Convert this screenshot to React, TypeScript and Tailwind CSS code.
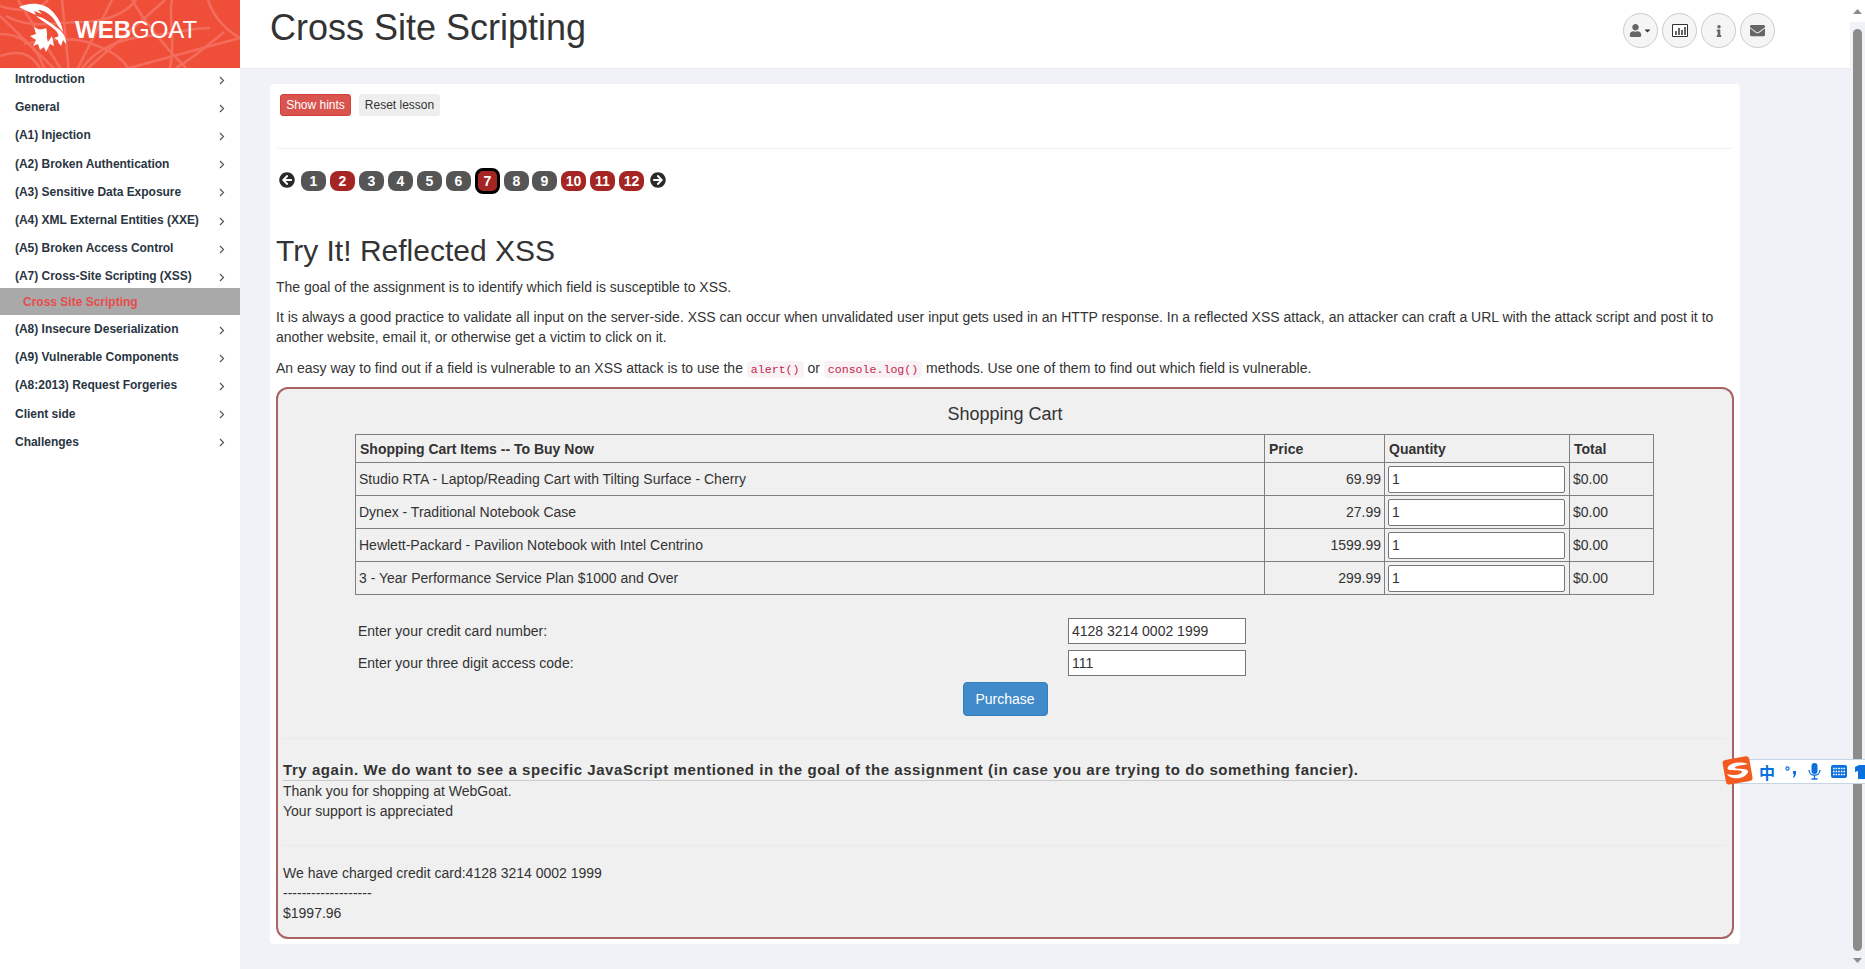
import { FaArrowCircleLeft, FaArrowCircleRight, FaUser, FaCaretDown, FaInfo, FaEnvelope } from "react-icons/fa";

const nav = [
  "Introduction",
  "General",
  "(A1) Injection",
  "(A2) Broken Authentication",
  "(A3) Sensitive Data Exposure",
  "(A4) XML External Entities (XXE)",
  "(A5) Broken Access Control",
  "(A7) Cross-Site Scripting (XSS)",
];
const nav2 = ["(A8) Insecure Deserialization", "(A9) Vulnerable Components", "(A8:2013) Request Forgeries", "Client side", "Challenges"];
const cart = [
  ["Studio RTA - Laptop/Reading Cart with Tilting Surface - Cherry", "69.99"],
  ["Dynex - Traditional Notebook Case", "27.99"],
  ["Hewlett-Packard - Pavilion Notebook with Intel Centrino", "1599.99"],
  ["3 - Year Performance Service Plan $1000 and Over", "299.99"],
];
const pages = [1, 2, 3, 4, 5, 6, 7, 8, 9, 10, 11, 12];
const red = [2, 10, 11, 12];

function NavRow({ label }: { label: string }) {
  return (
    <div className="flex h-[28.2px] items-center justify-between pl-[15px] pr-[15px] text-[12px] font-bold text-[#2a3542]">
      <span className="tracking-[-0.02px]">{label}</span>
      <svg width="6" height="9" viewBox="0 0 6 9" className="mt-[2px]">
        <path d="M1 1l3.5 3.5L1 8" fill="none" stroke="#555" strokeWidth="1.2" />
      </svg>
    </div>
  );
}

function Logo() {
  return (
    <div className="relative flex h-[68px] w-[240px] shrink-0 items-center overflow-hidden bg-[#ef4f39]">
      <svg width="240" height="68" viewBox="0 0 240 68" className="absolute left-0 top-0">
        <g fill="none" stroke="#f36c5c" strokeWidth="2.6">
          <path d="M70 84L0 16M70 84L18 0M70 84L62 0M70 84L112 0M70 84L165 0M70 84L240 38" />
          <path d="M208 0C214 18 226 30 240 38M224 32C205 48 190 60 176 68M132 0C146 24 168 50 186 68M172 0C168 16 176 40 170 68" />
          <path d="M0 56C18 50 30 52 40 68M0 34C16 34 34 40 44 68M0 6C24 14 42 8 48 0M24 44C44 40 76 36 92 44C110 50 122 58 128 68M6 16C30 30 60 22 82 22C104 22 126 14 136 0M82 68C96 50 118 38 150 36C170 34 190 28 210 28" />
        </g>
      </svg>
      <svg width="50" height="52" viewBox="0 0 50 52" className="relative ml-[18px] mt-[-12px] shrink-0">
        <g fill="#fff">
          <path d="M1 5C10 0 26 0 34 9C40 15 44 22 45 30L40 24C36 15 28 8 20 8L24 12L16 9L18 13L9 9Z" />
          <path d="M18 14C26 15 34 22 42 28C46 32 48 36 48 42L45 38L43 44L40 40C42 35 40 30 36 27C30 22 24 19 18 14Z" />
          <path d="M16 25C20 28 24 28 28 26C30 32 28 36 30 40L34 34L36 44L32 42L28 50L26 45L22 48L20 42L15 44L18 38L12 34L18 32Z" />
          <path d="M36 36L44 33L41 39Z" />
        </g>
      </svg>
      <div className="relative ml-[7px] mt-[-9px] text-[24px] leading-none text-white">
        <span className="font-bold">WEB</span>
        <span>GOAT</span>
      </div>
    </div>
  );
}

function RoundBtn({ children }: { children: React.ReactNode }) {
  return (
    <div className="flex h-[35px] w-[35px] items-center justify-center rounded-full border border-[#ccc] bg-[#f5f5f5] text-[#666]">
      {children}
    </div>
  );
}

function Sogou() {
  return (
    <div className="absolute left-[1721px] top-[755px] h-[31px] w-[144px]">
      <div className="absolute left-[14px] top-[4px] flex h-[25px] w-[130px] items-center overflow-hidden border-y border-[#c5d6e6] bg-white pl-[24px] text-[#0b6fdc]">
        <span className="w-[16px] shrink-0 font-['Noto_Sans_CJK_SC',sans-serif] text-[16px] font-bold leading-none">中</span>
        <svg width="12" height="14" viewBox="0 0 12 14" className="ml-[10px] shrink-0"><circle cx="2.5" cy="3.5" r="1.6" fill="none" stroke="#0b6fdc" strokeWidth="1.2" /><path d="M8 6h3v2c0 2.5-1 4-3 5l1-4H8z" fill="#0b6fdc" /></svg>
        <svg width="13" height="17" viewBox="0 0 13 17" className="ml-[11px] shrink-0"><rect x="3.5" y="0" width="6" height="11" rx="3" fill="#0b6fdc" /><path d="M1 7c0 7 11 7 11 0M6.500 12v4M3.500 16h6" stroke="#0b6fdc" strokeWidth="1.3" fill="none" /></svg>
        <svg width="16" height="13" viewBox="0 0 16 13" className="ml-[10px] shrink-0"><rect width="16" height="13" rx="2" fill="#0b6fdc" /><path d="M2 3.500h12M2 6.500h12M2 9.500h12" stroke="#fff" strokeWidth="1.4" strokeDasharray="1.6 1" /></svg>
        <svg width="14" height="14" viewBox="0 0 14 14" className="ml-[8px] shrink-0"><path d="M0 2L4 0h6l4 2v5l-2-1v8H3V6L0 7z" fill="#0b6fdc" /></svg>
      </div>
      <svg width="33" height="31" viewBox="0 0 33 31" className="absolute left-0 top-0">
        <rect x="3" y="3" width="27" height="25" rx="3" fill="#f25a1f" transform="rotate(-10 16 15)" />
        <path d="M27 9C19 6 8 8 6.500 13C6 17 20 14 21 16.500C21 20 12 21 6 19C9 25 24 25 27 17C28 12 13 15 14 12.500C15 10.500 21 10.500 27 9Z" fill="#fff" />
      </svg>
    </div>
  );
}

export default function App() {
  return (
    <div className="relative flex h-[969px] w-[1865px] overflow-hidden bg-[#f1f2f7] font-['Liberation_Sans',Arial,sans-serif] text-[14px] leading-[20px] text-[#333]">
      <aside className="flex h-full w-[240px] shrink-0 flex-col bg-white">
        <Logo />
        <div className="mt-[-3px]">
          {nav.map((n) => (
            <NavRow key={n} label={n} />
          ))}
          <div className="mt-[-2.5px] flex h-[27px] items-center bg-[#a9a9a9] pl-[23px] text-[12px] font-bold text-[#e74c4c]">Cross Site Scripting</div>
          {nav2.map((n) => (
            <NavRow key={n} label={n} />
          ))}
        </div>
      </aside>

      <main className="flex h-full w-[1610px] shrink-0 flex-col">
        <header className="flex h-[69px] shrink-0 items-start justify-between border-b border-[#e8e9ee] bg-white pl-[30px] pr-[75px]">
          <h1 className="mt-[6px] text-[36px] leading-[43px] text-[#333]">Cross Site Scripting</h1>
          <div className="mt-[13px] flex gap-[4px]">
            <RoundBtn>
              <span className="flex items-center gap-[1px]"><FaUser size={13} /><FaCaretDown size={9} className="text-[#333]" /></span>
            </RoundBtn>
            <RoundBtn>
              <svg width="16" height="13" viewBox="0 0 16 13"><path d="M.5.5h15v12H.5z" fill="#fff" stroke="#333" /><path d="M3 11V7h2v4zM6 11V4h2v7zM9 11V6h2v5zM12 11V3h2v8z" fill="#666" /></svg>
            </RoundBtn>
            <RoundBtn><FaInfo size={12} /></RoundBtn>
            <RoundBtn><FaEnvelope size={15} /></RoundBtn>
          </div>
        </header>

        <div className="pl-[30px] pt-[15px]">
          <section className="h-[860px] w-[1470px] rounded-[4px] bg-white pl-[6px] pr-[6px]">
            <div className="h-[65px] rounded-[4px] border-b border-[#eee] pl-[4px] pt-[10px]">
              <div className="flex gap-[8px]">
                <div className="flex h-[22px] w-[71px] items-center justify-center rounded-[3px] border border-[#d43f3a] bg-[#d9534f] text-[12px] text-white">Show hints</div>
                <div className="flex h-[22px] w-[81px] items-center justify-center rounded-[3px] bg-[#eee] text-[12px] text-[#333]">Reset lesson</div>
              </div>
            </div>

            <div className="mt-[22px] flex h-[20px] items-center">
              <FaArrowCircleLeft size={16} className="ml-[3px] mt-[-2px] text-[#2a2a2a]" />
              <div className="ml-[6px] flex items-center gap-[4px]">
                {pages.map((p) => (
                  <div
                    key={p}
                    className={
                      p === 7
                        ? "flex h-[26px] w-[25px] items-center justify-center rounded-[8px] border-[3px] border-black bg-[#a52525] text-[14px] font-bold text-white"
                        : p === 9
                          ? "ml-[-1px] flex h-[20px] w-[25px] items-center justify-center rounded-[8px] bg-[#555] text-[14px] font-bold text-white"
                          : red.includes(p)
                            ? "flex h-[20px] w-[25px] items-center justify-center rounded-[8px] bg-[#a52525] text-[14px] font-bold text-white"
                            : "flex h-[20px] w-[25px] items-center justify-center rounded-[8px] bg-[#555] text-[14px] font-bold text-white"
                    }
                  >
                    {p}
                  </div>
                ))}
              </div>
              <FaArrowCircleRight size={16} className="ml-[6px] mt-[-2px] text-[#2a2a2a]" />
            </div>

            <h2 className="mt-[43px] text-[30px] leading-[33px] text-[#333]">Try It! Reflected XSS</h2>
            <p className="mt-[10px]">The goal of the assignment is to identify which field is susceptible to XSS.</p>
            <p className="mt-[10px]">
              It is always a good practice to validate all input on the server-side. XSS can occur when unvalidated user input gets used in an HTTP response. In a reflected XSS attack, an attacker can craft a URL with the attack script and post it to another website, email it, or otherwise get a victim to click on it.
            </p>
            <p className="mt-[11px]">
              An easy way to find out if a field is vulnerable to an XSS attack is to use the{" "}
              <code className="rounded-[4px] bg-[#f9f2f4] px-[4px] py-[2px] font-['Liberation_Mono',monospace] text-[11.6px] text-[#c7254e]">alert()</code> or{" "}
              <code className="rounded-[4px] bg-[#f9f2f4] px-[4px] py-[2px] font-['Liberation_Mono',monospace] text-[11.6px] text-[#c7254e]">console.log()</code> methods. Use one of them to find out which field is vulnerable.
            </p>

            <div className="mt-[7px] h-[552px] overflow-hidden rounded-[12px] border-2 border-[#a86464] bg-[#f0f0f0] px-[5px]">
              <h3 className="mt-[14px] text-center text-[18px] leading-[22px]">Shopping Cart</h3>
              <table className="ml-[72px] mt-[9px] w-[1298px] table-fixed border-collapse border border-[#808080]">
                <colgroup>
                  <col className="w-[909px]" />
                  <col className="w-[120px]" />
                  <col className="w-[185px]" />
                  <col className="w-[84px]" />
                </colgroup>
                <thead>
                  <tr className="h-[28px] text-left font-bold">
                    <th className="border border-[#808080] pl-[4px] pt-[1px]">Shopping Cart Items -- To Buy Now</th>
                    <th className="border border-[#808080] pl-[4px] pt-[1px]">Price</th>
                    <th className="border border-[#808080] pl-[4px] pt-[1px]">Quantity</th>
                    <th className="border border-[#808080] pl-[4px] pt-[1px]">Total</th>
                  </tr>
                </thead>
                <tbody>
                  {cart.map(([name, price]) => (
                    <tr key={name} className="h-[33px]">
                      <td className="border border-[#808080] pl-[3px]">{name}</td>
                      <td className="border border-[#808080] pr-[3px] text-right">{price}</td>
                      <td className="border border-[#808080] pl-[3px] pr-[4px]">
                        <input readOnly value="1" className="block h-[27px] w-full rounded-[2px] border border-[#767676] bg-white px-[3px] text-[14px]" />
                      </td>
                      <td className="border border-[#808080] pl-[3px]">$0.00</td>
                    </tr>
                  ))}
                </tbody>
              </table>

              <div className="ml-[75px] mt-[22px] flex h-[27px] items-center">
                <span className="w-[710px]">Enter your credit card number:</span>
                <input readOnly value="4128 3214 0002 1999" className="h-[26px] w-[178px] border border-[#767676] bg-white px-[3px] text-[14px]" />
              </div>
              <div className="ml-[75px] mt-[5px] flex h-[27px] items-center">
                <span className="w-[710px]">Enter your three digit access code:</span>
                <input readOnly value="111" className="h-[26px] w-[178px] border border-[#767676] bg-white px-[3px] text-[14px]" />
              </div>
              <div className="mt-[6px] flex justify-center">
                <div className="flex h-[34px] w-[85px] items-center justify-center rounded-[4px] border border-[#357ebd] bg-[#428bca] text-white">Purchase</div>
              </div>

              <div className="mt-[22px] border-t border-[#eaeaea]" />
              <div className="mt-[21px] border-b border-[#ccc] text-[15px] font-bold leading-[20px] tracking-[0.57px]">
                Try again. We do want to see a specific JavaScript mentioned in the goal of the assignment (in case you are trying to do something fancier).
              </div>
              <div className="mt-[0px]">Thank you for shopping at WebGoat.</div>
              <div>Your support is appreciated</div>
              <div className="mt-[24px] border-t border-[#eaeaea]" />
              <div className="mt-[17px]">We have charged credit card:4128 3214 0002 1999</div>
              <div>-------------------</div>
              <div>$1997.96</div>
            </div>
          </section>
        </div>
      </main>

      <div className="flex h-full w-[15px] shrink-0 flex-col items-center bg-[#f1f2f7]">
        <div className="flex h-[22px] w-full items-center justify-center bg-white">
          <svg width="9" height="5" viewBox="0 0 9 5"><path d="M0 5L4.500 0L9 5z" fill="#8c8c8c" /></svg>
        </div>
        <div className="mt-[7px] h-[922px] w-[9px] rounded-[5px] bg-[#8c8c8c]" />
        <div className="mt-[5px] flex h-[8px] w-full items-center justify-center">
          <svg width="9" height="5" viewBox="0 0 9 5"><path d="M0 0L4.500 5L9 0z" fill="#8c8c8c" /></svg>
        </div>
      </div>

      <Sogou />
    </div>
  );
}
